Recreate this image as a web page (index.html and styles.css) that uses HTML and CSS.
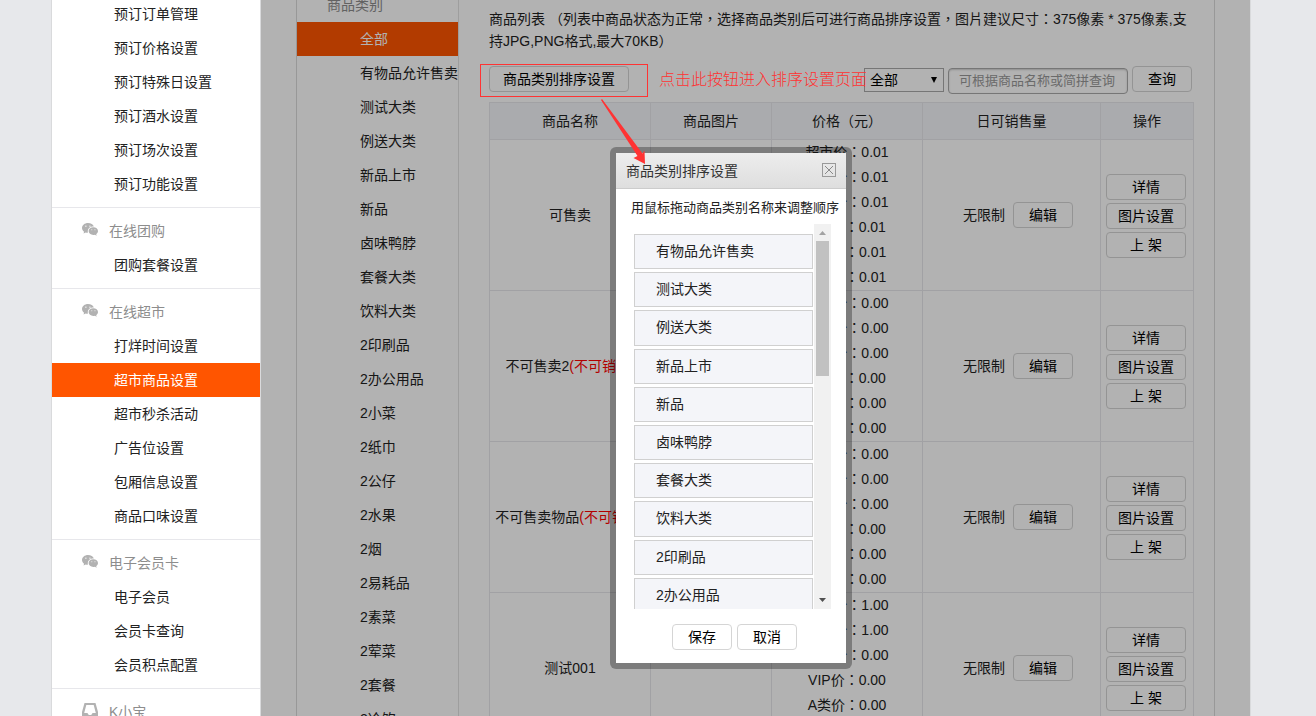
FILE: index.html
```html
<!DOCTYPE html>
<html lang="zh-CN">
<head>
<meta charset="utf-8">
<title>超市商品设置</title>
<link rel="stylesheet" href="styles.css">
</head>
<body>
<svg class="sprite" aria-hidden="true">
  <symbol id="icon-chat" viewBox="0 0 16 13">
    <path fill="#b2b2b2" d="M6 0C2.700 0 0 2.200 0 5c0 1.500.8 2.900 2.100 3.800L1.500 10.600l2.200-1.100c.7.200 1.400.3 2.200.3A4.300 4.300 0 0 1 5.800 8.300C5.800 5.500 8.300 3.500 11.500 3.500h.3C11.200 1.500 8.800 0 6 0z"/>
    <path fill="#b2b2b2" d="M16 8.100c0-2.200-2.100-3.900-4.700-3.900S6.600 5.900 6.600 8.100 8.700 12 11.300 12c.6 0 1.100-.1 1.600-.2l1.800.9-.5-1.500C15.300 10.500 16 9.400 16 8.100z"/>
    <path fill="#e4e4e4" d="M3.200 2.600h1.300v1.300H3.200zM7.300 2.600h1.300v1.300H7.300zM9.200 6.200h1.100v1.100H9.200zM12.400 6.200h1.100v1.100h-1.100z"/>
  </symbol>
  <symbol id="icon-tray" viewBox="0 0 16 15">
    <path fill="#b2b2b2" fill-rule="evenodd" d="M2.500 0h11L16 9v4.500a1.500 1.500 0 0 1-1.500 1.500h-13A1.500 1.500 0 0 1 0 13.500V9zM4.300 2L2.200 10h3.200l1.400 2h2.400l1.400-2h3.200L11.700 2z"/>
  </symbol>
</svg>
<div class="page">
  <nav class="sidebar">
    <section class="menu">
      <a href="#">预订订单管理</a>
      <a href="#">预订价格设置</a>
      <a href="#">预订特殊日设置</a>
      <a href="#">预订酒水设置</a>
      <a href="#">预订场次设置</a>
      <a href="#">预订功能设置</a>
    </section>
    <section class="menu">
      <h2><svg><use href="#icon-chat"/></svg>在线团购</h2>
      <a href="#">团购套餐设置</a>
    </section>
    <section class="menu">
      <h2><svg><use href="#icon-chat"/></svg>在线超市</h2>
      <a href="#">打烊时间设置</a>
      <a href="#" class="active">超市商品设置</a>
      <a href="#">超市秒杀活动</a>
      <a href="#">广告位设置</a>
      <a href="#">包厢信息设置</a>
      <a href="#">商品口味设置</a>
    </section>
    <section class="menu">
      <h2><svg><use href="#icon-chat"/></svg>电子会员卡</h2>
      <a href="#">电子会员</a>
      <a href="#">会员卡查询</a>
      <a href="#">会员积点配置</a>
    </section>
    <section class="menu">
      <h2><svg class="tray"><use href="#icon-tray"/></svg>K小宝</h2>
    </section>
  </nav>

  <main class="main">
    <div class="card">
      <aside class="categories">
        <h2>商品类别</h2>
        <a href="#" class="active">全部</a>
        <a href="#">有物品允许售卖</a>
        <a href="#">测试大类</a>
        <a href="#">例送大类</a>
        <a href="#">新品上市</a>
        <a href="#">新品</a>
        <a href="#">卤味鸭脖</a>
        <a href="#">套餐大类</a>
        <a href="#">饮料大类</a>
        <a href="#">2印刷品</a>
        <a href="#">2办公用品</a>
        <a href="#">2小菜</a>
        <a href="#">2纸巾</a>
        <a href="#">2公仔</a>
        <a href="#">2水果</a>
        <a href="#">2烟</a>
        <a href="#">2易耗品</a>
        <a href="#">2素菜</a>
        <a href="#">2荤菜</a>
        <a href="#">2套餐</a>
        <a href="#">2冷饮</a>
      </aside>
      <div class="content">
        <p class="intro">商品列表 （列表中商品状态为正常，选择商品类别后可进行商品排序设置，图片建议尺寸：375像素 * 375像素,支持JPG,PNG格式,最大70KB）</p>
        <div class="toolbar">
          <button type="button" class="btn btn-sort">商品类别排序设置</button>
          <div class="filters">
            <span class="select">
              <select aria-label="商品类别"><option>全部</option></select>
              <svg viewBox="0 0 6 6"><path d="M0 0h6L3 6z"/></svg>
            </span>
            <input type="text" class="search" aria-label="商品名称" placeholder="可根据商品名称或简拼查询">
            <button type="button" class="btn">查询</button>
          </div>
        </div>
        <table class="goods">
          <colgroup><col class="c-name"><col class="c-pic"><col class="c-price"><col class="c-stock"><col class="c-op"></colgroup>
          <thead>
            <tr><th>商品名称</th><th>商品图片</th><th class="wide">价格（元）</th><th>日可销售量</th><th>操作</th></tr>
          </thead>
          <tbody>
            <tr>
              <td>可售卖</td><td></td>
              <td class="price">超市价：0.01<br>零售价：0.01<br>会员价：0.01<br>VIP价：0.01<br>A类价：0.01<br>B类价：0.01</td>
              <td class="stock">无限制<button type="button" class="btn">编辑</button></td>
              <td class="ops"><div><button type="button" class="btn">详情</button><button type="button" class="btn">图片设置</button><button type="button" class="btn">上 架</button></div></td>
            </tr>
            <tr>
              <td>不可售卖2<em>(不可销售)</em></td><td></td>
              <td class="price">超市价：0.00<br>零售价：0.00<br>会员价：0.00<br>VIP价：0.00<br>A类价：0.00<br>B类价：0.00</td>
              <td class="stock">无限制<button type="button" class="btn">编辑</button></td>
              <td class="ops"><div><button type="button" class="btn">详情</button><button type="button" class="btn">图片设置</button><button type="button" class="btn">上 架</button></div></td>
            </tr>
            <tr>
              <td>不可售卖物品<em>(不可销售)</em></td><td></td>
              <td class="price">超市价：0.00<br>零售价：0.00<br>会员价：0.00<br>VIP价：0.00<br>A类价：0.00<br>B类价：0.00</td>
              <td class="stock">无限制<button type="button" class="btn">编辑</button></td>
              <td class="ops"><div><button type="button" class="btn">详情</button><button type="button" class="btn">图片设置</button><button type="button" class="btn">上 架</button></div></td>
            </tr>
            <tr>
              <td>测试001</td><td></td>
              <td class="price">超市价：1.00<br>零售价：1.00<br>会员价：0.00<br>VIP价：0.00<br>A类价：0.00<br>B类价：0.00</td>
              <td class="stock">无限制<button type="button" class="btn">编辑</button></td>
              <td class="ops"><div><button type="button" class="btn">详情</button><button type="button" class="btn">图片设置</button><button type="button" class="btn">上 架</button></div></td>
            </tr>
          </tbody>
        </table>
      </div>
    </div>

    <div class="mask"></div>

    <div class="dialog" role="dialog" aria-labelledby="dialog-title">
      <header class="dialog-head">
        <h1 id="dialog-title">商品类别排序设置</h1>
        <button type="button" class="close" aria-label="关闭"><svg viewBox="0 0 8 8"><path d="M0 0l8 8M8 0L0 8"/></svg></button>
      </header>
      <p class="hint">用鼠标拖动商品类别名称来调整顺序</p>
      <div class="scroller">
        <ul class="sort-list">
          <li>有物品允许售卖</li>
          <li>测试大类</li>
          <li>例送大类</li>
          <li>新品上市</li>
          <li>新品</li>
          <li>卤味鸭脖</li>
          <li>套餐大类</li>
          <li>饮料大类</li>
          <li>2印刷品</li>
          <li>2办公用品</li>
        </ul>
        <div class="scrollbar" aria-hidden="true">
          <svg class="up" viewBox="0 0 7 4"><path d="M0 4h7L3.500 0z"/></svg>
          <span class="thumb"></span>
          <svg class="down" viewBox="0 0 7 4"><path d="M0 0h7L3.500 4z"/></svg>
        </div>
      </div>
      <footer class="dialog-foot">
        <button type="button" class="btn">保存</button>
        <button type="button" class="btn">取消</button>
      </footer>
    </div>

    <div class="callout-box"></div>
    <p class="callout-text">点击此按钮进入排序设置页面</p>
    <svg class="callout-arrow" viewBox="0 0 44 65"><path d="M0 1L1 0 41.500 54.500l2-3 .5 13.500L32.500 59l4-2z"/></svg>
  </main>
</div>
</body>
</html>
```
FILE: styles.css
```css
* {
  box-sizing: border-box;
}

body {
  margin: 0;
  background: #e7e8eb;
  color: #222;
  font-family: "Liberation Sans", "Noto Sans CJK SC", sans-serif;
  font-size: 14px;
}

h1, h2, p, ul {
  margin: 0;
  padding: 0;
  font-size: 14px;
  font-weight: inherit;
}

a {
  color: inherit;
  text-decoration: none;
}

button, input, select {
  font: inherit;
  color: #000;
}

.sprite {
  display: none;
}

.page {
  display: flex;
  height: 100vh;
  margin: 0 65px 0 51px;
  overflow: hidden;
  border: solid #d9dadc;
  border-width: 0 1px;
  background: #fff;
}

/* Left navigation */
.sidebar {
  flex: none;
  width: 209px;
  margin-top: -9px;
  border-right: 1px solid #d9dadc;
}

.menu {
  padding: 6px 0;
  border-top: 1px solid #e7e7eb;
}

.menu:first-child {
  border-top: 0;
}

.menu h2 {
  display: flex;
  align-items: center;
  gap: 11px;
  padding-left: 30px;
  line-height: 34px;
  color: #8d8d8d;
}

.menu svg {
  width: 16px;
  height: 13px;
  margin-bottom: 3px;
}

.menu .tray {
  height: 15px;
}

.menu a {
  display: block;
  padding-left: 62px;
  line-height: 34px;
}

.menu .active,
.categories .active {
  background: #f50;
  color: #fff;
}

/* Main area */
.main {
  position: relative;
  flex: 1;
  min-width: 0;
  padding: 0 35px;
}

.card {
  display: flex;
  height: 100%;
  border: solid #dadada;
  border-width: 0 1px;
}

.categories {
  flex: none;
  width: 162px;
  margin-top: -12px;
  border-right: 1px solid #e3e3e3;
  white-space: nowrap;
}

.categories h2 {
  padding-left: 30px;
  line-height: 34px;
  color: #8d8d8d;
}

.categories a {
  display: block;
  padding-left: 63px;
  line-height: 34px;
}

.content {
  flex: 1;
  min-width: 0;
  padding: 8px 20px 0 30px;
}

/* Full-width punctuation centred in its em box */
.intro,
.price,
.goods .wide {
  font-family: "Liberation Sans", "Noto Sans CJK TC", sans-serif;
  font-feature-settings: "locl" 0;
}

.intro {
  line-height: 22px;
}

.toolbar {
  display: flex;
  justify-content: space-between;
  margin: 14px 0 8px;
  padding-right: 2px;
}

.filters {
  display: flex;
  gap: 4px;
}

.btn {
  width: 60px;
  height: 26px;
  padding: 0;
  border: 1px solid #d5d5d5;
  border-radius: 4px;
  background: #fff;
  line-height: 24px;
  text-align: center;
}

.btn-sort {
  width: 140px;
}

.select {
  position: relative;
  width: 80px;
  height: 24px;
  margin-top: 2px;
}

.select select {
  width: 100%;
  height: 100%;
  padding: 0 5px;
  appearance: none;
  border: 1px solid #a9a9a9;
  border-radius: 0;
  background: #fff;
}

.select svg {
  position: absolute;
  top: 9px;
  right: 7px;
  width: 6px;
  height: 6px;
}

.search {
  width: 180px;
  height: 26px;
  margin-top: 2px;
  padding: 0 10px 2px;
  border: 1px solid #a9a9a9;
  border-radius: 4px;
  background: #fff;
  box-shadow: inset 0 1px 2px #ccc;
  font-size: 13px;
}

.search::placeholder {
  color: #999;
}

.goods {
  width: 100%;
  table-layout: fixed;
  border-collapse: collapse;
}

.c-name { width: 161px; }
.c-pic { width: 121px; }
.c-price { width: 151px; }
.c-stock { width: 178px; }

.goods th,
.goods td {
  padding: 0;
  border: 1px solid #e7e7eb;
  font-weight: inherit;
  line-height: 25px;
  text-align: center;
  white-space: nowrap;
  overflow: hidden;
}

.goods th {
  height: 37px;
  background: #f4f5f9;
}

.goods em {
  color: #f00;
  font-style: normal;
}

.goods .stock {
  padding-left: 13px;
}

.stock .btn {
  margin-left: 8px;
}

.goods .ops {
  padding: 2px 2px 0 0;
}

.ops div {
  display: grid;
  gap: 3px;
  justify-content: center;
}

.ops .btn {
  width: 80px;
}

.mask {
  position: absolute;
  inset: 0;
  background: rgba(0, 0, 0, .3);
}

/* Sorting dialog */
.dialog {
  position: absolute;
  top: 147px;
  left: 349px;
  width: 242px;
  border: 6px solid rgba(0, 0, 0, .3);
  border-radius: 6px;
  background: #fff;
  background-clip: padding-box;
}

.dialog-head {
  display: flex;
  align-items: center;
  justify-content: space-between;
  height: 36px;
  padding: 0 10px 2px;
  border-bottom: 1px solid #ccc;
  background: linear-gradient(#ededed, #dedede);
  color: #333;
}

.close {
  display: grid;
  place-items: center;
  width: 14px;
  height: 14px;
  padding: 0;
  border: 1px solid #999;
  background: none;
}

.close svg {
  width: 8px;
  height: 8px;
  fill: none;
  stroke: #888;
}

.hint {
  padding: 8px 0 5px 15px;
  font-size: 13px;
  line-height: 22px;
  white-space: nowrap;
}

.scroller {
  display: flex;
  height: 385px;
  margin: 0 15px 0 18px;
  overflow: hidden;
}

.sort-list {
  display: grid;
  grid-auto-rows: 1fr;
  gap: 3px;
  flex: 1;
  height: 379px;
  margin: 10px 1px 0 0;
  list-style: none;
}

.sort-list li {
  padding-left: 21px;
  border: 1px solid #d0d0d0;
  background: #f4f5f9;
  line-height: 33px;
}

.scrollbar {
  display: flex;
  flex-direction: column;
  align-items: center;
  width: 17px;
  padding: 7px 0;
  background: #f1f1f1;
}

.scrollbar svg {
  width: 7px;
  height: 4px;
}

.up {
  fill: #a3a3a3;
}

.down {
  margin-top: auto;
  fill: #505050;
}

.thumb {
  width: 13px;
  height: 135px;
  margin-top: 6px;
  background: #c1c1c1;
}

.dialog-foot {
  display: flex;
  justify-content: center;
  gap: 5px;
  padding: 15px 0 13px 7px;
}

/* Callout drawn over the page */
.callout-box {
  position: absolute;
  top: 64px;
  left: 219px;
  width: 168px;
  height: 33px;
  border: 1px solid #f33;
}

.callout-text {
  position: absolute;
  top: 69px;
  left: 398px;
  color: #f33;
  font-size: 16px;
  font-weight: 300;
  line-height: 22px;
  white-space: nowrap;
}

.callout-arrow {
  position: absolute;
  top: 99px;
  left: 340px;
  width: 44px;
  height: 65px;
  fill: #f33;
}
```
